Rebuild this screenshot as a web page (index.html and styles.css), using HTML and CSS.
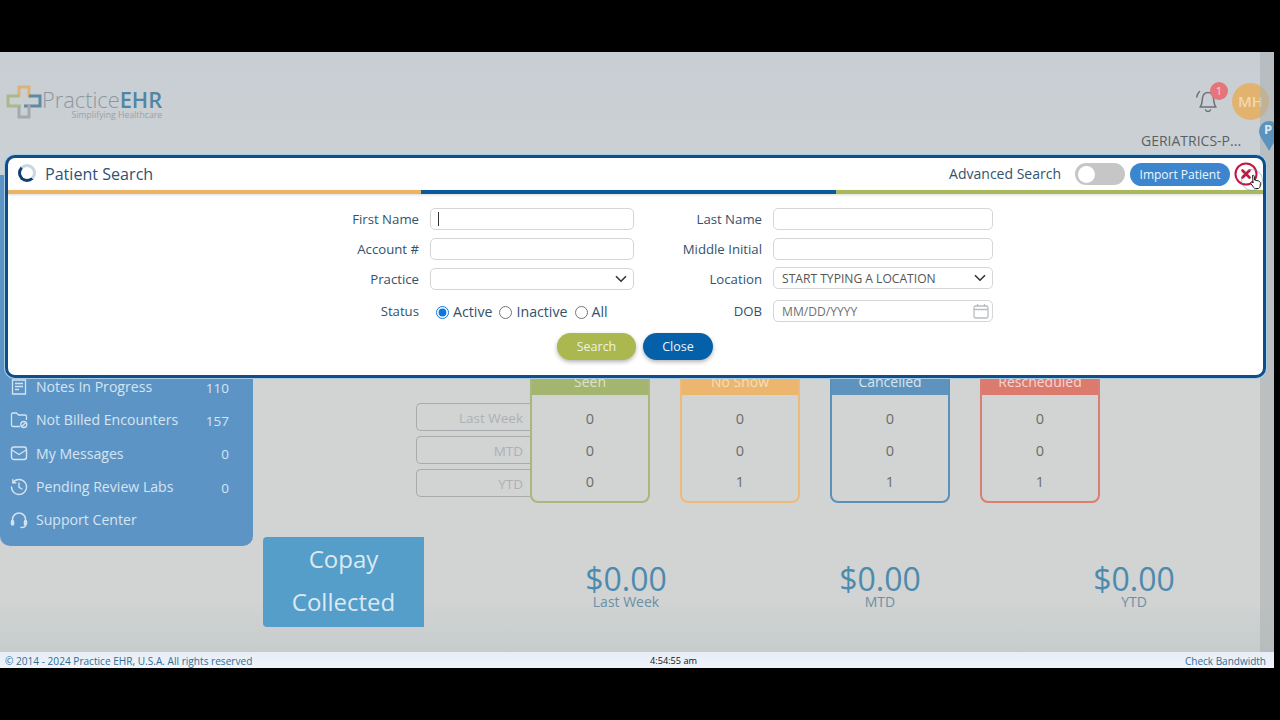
FILE: index.html
```html
<!DOCTYPE html>
<html lang="en">

<head>
  <meta charset="UTF-8">
  <meta name="viewport" content="width=device-width, initial-scale=1.0">
  <title>Practice EHR</title>
  <link rel="stylesheet" href="styles.css">
</head>

<body>
  <div class="app">

    <header class="top">
      <div class="logo">
        <svg class="logo-mark" width="36" height="34" viewBox="0 0 36 34" fill="none" stroke-width="3">
          <path d="M13 12V2H23V13" stroke="#dcb27a" />
          <path d="M13 11H2V21H15" stroke="#aab88a" />
          <path d="M23 11H34V21H18" stroke="#5d8aa6" />
          <path d="M13 22V32H23V19" stroke="#a3a9ad" />
        </svg>
        <div class="logo-text">
          <div class="logo-name">Practice<b>EHR</b></div>
          <div class="logo-sub">Simplifying Healthcare</div>
        </div>
      </div>
      <div class="user">
        <div class="user-row">
          <svg class="bell" width="26" height="28" viewBox="0 0 26 28" fill="none" stroke="#6d7377" stroke-width="1.5" stroke-linecap="round" stroke-linejoin="round">
            <path d="M5 20c2-2 2-5 2.500-9 .5-3.500 3-5.500 5.500-5.500s5 2 5.500 5.500c.5 4 .5 7 2.500 9z" />
            <path d="M10.500 23a2.800 2.800 0 0 0 5 0" />
            <path d="M4.500 4.500C3 6 2 8 1.800 10" />
          </svg>
          <span class="bell-count">1</span>
          <div class="avatar">MH</div>
        </div>
        <div class="user-practice">GERIATRICS-P...</div>
      </div>
    </header>

    <div class="main">
      <nav class="side">
        <a class="side-item">
          <svg width="18" height="18" viewBox="0 0 18 18" fill="none" stroke="#d3e3f0" stroke-width="1.300">
            <path d="M2.500 2h13v14h-13zM5 5.500h8M5 8.500h8M5 11.500h4" />
          </svg>
          <span class="side-label">Notes In Progress</span>
          <span class="side-count">110</span>
        </a>
        <a class="side-item">
          <svg width="18" height="18" viewBox="0 0 18 18" fill="none" stroke="#d3e3f0" stroke-width="1.300" stroke-linejoin="round">
            <path d="M10 15.500H3a1.500 1.500 0 0 1-1.500-1.500V3.500A1.500 1.500 0 0 1 3 2h3.500l2 2H15a1.500 1.500 0 0 1 1.500 1.500V9" />
            <circle cx="13.800" cy="13.500" r="3" />
            <path d="M12 15.300l3.600-3.600" />
          </svg>
          <span class="side-label">Not Billed Encounters</span>
          <span class="side-count">157</span>
        </a>
        <a class="side-item">
          <svg width="18" height="18" viewBox="0 0 18 18" fill="none" stroke="#d3e3f0" stroke-width="1.400" stroke-linejoin="round">
            <rect x="1.500" y="3" width="15" height="12.500" rx="2.500" />
            <path d="M1.800 6L9 10.500 16.200 6" />
          </svg>
          <span class="side-label">My Messages</span>
          <span class="side-count">0</span>
        </a>
        <a class="side-item">
          <svg width="18" height="18" viewBox="0 0 18 18" fill="none" stroke="#d3e3f0" stroke-width="1.400" stroke-linecap="round">
            <path d="M3 4.500A7.500 7.500 0 1 1 1.500 9" />
            <path d="M2.800 1.800v3h3M9 5v4.300l3 1.700" />
          </svg>
          <span class="side-label">Pending Review Labs</span>
          <span class="side-count">0</span>
        </a>
        <a class="side-item">
          <svg width="18" height="18" viewBox="0 0 18 18" fill="none" stroke="#d3e3f0" stroke-width="1.500" stroke-linecap="round">
            <path d="M2.500 11V8.500a6.500 6.500 0 0 1 13 0V11" />
            <rect x="1.500" y="9.500" width="2" height="4.500" rx="1" fill="#d3e3f0" />
            <rect x="14.500" y="9.500" width="2" height="4.500" rx="1" fill="#d3e3f0" />
            <path d="M15.500 14c0 1.500-2 2.500-4.500 2.500" />
          </svg>
          <span class="side-label">Support Center</span>
        </a>
      </nav>

      <section class="content">
        <div class="stats">
          <div class="period-list">
            <div class="period">Last Week</div>
            <div class="period">MTD</div>
            <div class="period">YTD</div>
          </div>
          <div class="card card-seen">
            <div class="card-title">Seen</div>
            <div class="card-row">0</div>
            <div class="card-row">0</div>
            <div class="card-row">0</div>
          </div>
          <div class="card card-noshow">
            <div class="card-title">No Show</div>
            <div class="card-row">0</div>
            <div class="card-row">0</div>
            <div class="card-row">1</div>
          </div>
          <div class="card card-cancelled">
            <div class="card-title">Cancelled</div>
            <div class="card-row">0</div>
            <div class="card-row">0</div>
            <div class="card-row">1</div>
          </div>
          <div class="card card-rescheduled">
            <div class="card-title">Rescheduled</div>
            <div class="card-row">0</div>
            <div class="card-row">0</div>
            <div class="card-row">1</div>
          </div>
        </div>

        <div class="copay">
          <div class="copay-tile">Copay<br>Collected</div>
          <div class="copay-amounts">
            <div class="amount"><div class="amount-value">$0.00</div><div class="amount-label">Last Week</div></div>
            <div class="amount"><div class="amount-value">$0.00</div><div class="amount-label">MTD</div></div>
            <div class="amount"><div class="amount-value">$0.00</div><div class="amount-label">YTD</div></div>
          </div>
        </div>
      </section>
    </div>

    <footer class="foot">
      <div class="foot-copy">© 2014 - 2024 Practice EHR, U.S.A. All rights reserved</div>
      <div class="foot-time">4:54:55 am</div>
      <div class="foot-link">Check Bandwidth</div>
    </footer>

    <div class="scrollbar"></div>
    <svg class="pin" width="20" height="32" viewBox="0 0 20 32">
      <path d="M10 1a10 10 0 0 1 10 10c0 6-6 12-10 20C6 23 0 17 0 11A10 10 0 0 1 10 1z" fill="#5b93bd" />
      <text x="5" y="14" font-size="13" font-weight="700" fill="#dde9f2" font-family="Open Sans">P</text>
    </svg>

    <div class="modal">
      <div class="modal-head">
        <span class="spinner"></span>
        <h1 class="modal-title">Patient Search</h1>
        <span class="adv-label">Advanced Search</span>
        <span class="toggle"><span class="toggle-knob"></span></span>
        <button class="btn-import">Import Patient</button>
        <span class="btn-x">
          <svg width="24" height="24" viewBox="0 0 24 24" fill="none" stroke-linecap="round">
            <circle cx="12" cy="12" r="10.500" stroke="#c5163f" stroke-width="2" />
            <path d="M8.500 8.500l7 7M15.500 8.500l-7 7" stroke="#c5163f" stroke-width="2.600" />
          </svg>
        </span>
      </div>
      <div class="stripe"><i class="s-orange"></i><i class="s-blue"></i><i class="s-green"></i></div>

      <form class="search-form">
        <label class="f-label">First Name</label>
        <input class="f-input f-focus" type="text">
        <label class="f-label">Last Name</label>
        <input class="f-input" type="text">

        <label class="f-label">Account #</label>
        <input class="f-input" type="text">
        <label class="f-label">Middle Initial</label>
        <input class="f-input" type="text">

        <label class="f-label">Practice</label>
        <div class="f-input f-select">
          <span></span>
          <svg width="12" height="8" viewBox="0 0 12 8" fill="none" stroke="#333" stroke-width="1.600"><path d="M1 1.200l5 5 5-5" /></svg>
        </div>
        <label class="f-label">Location</label>
        <div class="f-input f-select f-up">
          <span>START TYPING A LOCATION</span>
          <svg width="12" height="8" viewBox="0 0 12 8" fill="none" stroke="#333" stroke-width="1.600"><path d="M1 1.200l5 5 5-5" /></svg>
        </div>

        <label class="f-label f-row4">Status</label>
        <div class="radios f-row4">
          <input type="radio" name="status" checked><span>Active</span>
          <input type="radio" name="status"><span>Inactive</span>
          <input type="radio" name="status"><span>All</span>
        </div>
        <label class="f-label f-row4">DOB</label>
        <div class="f-input f-select f-row4">
          <span class="f-hint">MM/DD/YYYY</span>
          <svg class="f-cal" width="16" height="15" viewBox="0 0 16 15" fill="none" stroke="#b9bdc0" stroke-width="1.300">
            <rect x="1" y="2" width="14" height="12" rx="1.500" />
            <path d="M1 5.500h14M4.500 0v2.500M11.500 0v2.500" />
          </svg>
        </div>
      </form>

      <div class="form-actions">
        <button class="btn btn-search">Search</button>
        <button class="btn btn-close">Close</button>
      </div>
    </div>

    <span class="hand-ring"></span>
    <svg class="hand" width="13" height="16" viewBox="0 0 13 16">
      <path d="M3.500 1.500c1-.5 1.700 0 1.800 1l.3 3.500 4 1c1.400.4 2 1.300 1.800 2.700l-.4 3c-.2 1-1 1.800-2 1.800H6.500c-.8 0-1.300-.3-1.800-1L1.800 9.500c-.5-.8.500-1.800 1.400-1.200l.9.700z" fill="#fff" stroke="#222" stroke-width="1" stroke-linejoin="round" />
    </svg>

  </div>
</body>

</html>
```

FILE: styles.css
```css
body {
  margin: 0;
  height: 720px;
  overflow: hidden;
  background: #000;
  font-family: 'Open Sans', 'Liberation Sans', sans-serif;
}

.app {
  position: relative;
  width: 1274px;
  height: 616px;
  margin-top: 52px;
  display: flex;
  flex-direction: column;
  overflow: hidden;
  background: linear-gradient(#c8ced3, #cbd0d4 100px, #d2d3d3 340px, #d2d3d3 550px, #c6cccc 600px);
}

/* top bar */
.top {
  height: 98px;
  display: flex;
  justify-content: space-between;
  flex-shrink: 0;
}

.logo {
  display: flex;
  align-items: flex-start;
  padding: 33px 0 0 6px;
}

.logo-text {
  margin-top: 2px;
}

.logo-name {
  font-size: 21.800px;
  line-height: 26px;
  font-weight: 300;
  color: #8b98a2;
}

.logo-name b {
  font-weight: 600;
  color: #4f86a4;
}

.logo-sub {
  margin-top: -3px;
  font-size: 8.700px;
  line-height: 11px;
  text-align: right;
  color: #99a2a8;
}

.user {
  width: 140px;
  padding: 30px 0 0 61px;
  box-sizing: border-box;
  position: relative;
}

.user-row {
  display: flex;
  align-items: center;
  height: 38px;
}

.bell {
  margin-right: 11px;
  flex-shrink: 0;
}

.bell-count {
  position: absolute;
  left: 76px;
  top: 30px;
  width: 18px;
  height: 18px;
  border-radius: 50%;
  background: #e4757a;
  color: #f6d7d4;
  font-size: 11px;
  line-height: 18px;
  text-align: center;
}

.avatar {
  width: 37px;
  height: 37px;
  flex-shrink: 0;
  border-radius: 50%;
  background: #e2b36f;
  color: #f1d9b2;
  font-size: 15px;
  font-weight: 600;
  line-height: 37px;
  text-align: center;
}

.user-practice {
  margin: 11px 0 0 -54px;
  font-size: 14px;
  line-height: 20px;
  color: #5b6064;
  white-space: nowrap;
}

/* page body */
.main {
  flex: 1;
  display: flex;
  min-height: 0;
}

.side {
  width: 253px;
  height: 371px;
  margin-top: 25px;
  flex-shrink: 0;
  box-sizing: border-box;
  padding-top: 195px;
  background: #5d94c6;
  border-radius: 0 0 10px 10px;
}

.side-item {
  height: 33.300px;
  display: flex;
  align-items: center;
  padding: 0 24px 0 10px;
  color: #d6e5f1;
  font-size: 14.100px;
}

.side-label {
  flex: 1;
  margin-left: 8px;
}

.side-count {
  margin-top: 2px;
  font-size: 13.500px;
}

.content {
  flex: 1;
  padding: 219px 0 0 10px;
  min-width: 0;
}

.stats {
  display: flex;
  align-items: flex-start;
  padding-left: 153px;
  height: 134px;
}

.period-list {
  width: 114px;
  padding-top: 34px;
  display: flex;
  flex-direction: column;
  gap: 5px;
}

.period {
  height: 28px;
  box-sizing: border-box;
  border: 1.500px solid #a7abad;
  border-right: 0;
  border-radius: 5px 0 0 5px;
  padding-right: 7px;
  color: #aeb1b2;
  font-size: 13.500px;
  line-height: 29px;
  text-align: right;
}

.card {
  width: 120px;
  height: 134px;
  box-sizing: border-box;
  margin-right: 30px;
  border: 2px solid;
  border-radius: 0 0 8px 8px;
  background: #d2d3d3;
  color: #6a6d6e;
  text-align: center;
  font-size: 14.500px;
}

.card-title {
  height: 24px;
  margin-bottom: 8px;
  font-size: 14px;
  line-height: 22px;
}

.card-row {
  height: 31.500px;
  line-height: 31.500px;
}

.card-seen { border-color: #a9b77c; }
.card-seen .card-title { background: #a4b56f; color: #dfe4c8; }

.card-noshow { border-color: #ecbb7c; }
.card-noshow .card-title { background: #ecb66e; color: #f3dfbc; }

.card-cancelled { border-color: #5b90b7; }
.card-cancelled .card-title { background: #5d93bd; color: #d7e6f1; }

.card-rescheduled { border-color: #dd7c70; }
.card-rescheduled .card-title { background: #dc7a6e; color: #f5d6d0; }

.copay {
  display: flex;
  margin-top: 34px;
  height: 90px;
}

.copay-tile {
  width: 161px;
  flex-shrink: 0;
  background: #559ec9;
  border-radius: 4px 0 0 4px;
  color: #dce9f1;
  font-size: 24px;
  line-height: 43px;
  text-align: center;
}

.copay-amounts {
  display: grid;
  grid-template-columns: repeat(3, 254px);
  padding-left: 75px;
  padding-top: 26px;
}

.amount {
  text-align: center;
}

.amount-value {
  font-size: 32px;
  line-height: 32px;
  color: #4d8bae;
}

.amount-label {
  font-size: 14px;
  line-height: 14px;
  color: #6a90a6;
}

/* footer */
.foot {
  height: 16px;
  flex-shrink: 0;
  display: flex;
  padding-right: 8px;
  background: linear-gradient(#e6edf6, #f0f4f9);
  font-size: 10.100px;
  line-height: 18px;
  color: #2f6d96;
}

.foot-copy {
  width: 645px;
  padding-left: 5px;
}

.foot-time {
  color: #111;
  font-size: 9.200px;
}

.foot-link {
  margin-left: auto;
  font-size: 10px;
}

.scrollbar {
  position: absolute;
  right: 0;
  top: 0;
  bottom: 16px;
  width: 14px;
  background: rgba(170, 174, 176, 0.55);
}

.pin {
  position: absolute;
  left: 1259px;
  top: 68px;
}

/* modal */
.modal {
  position: absolute;
  left: 5px;
  top: 103px;
  width: 1261px;
  height: 223px;
  box-sizing: border-box;
  border: 3px solid #0f4e88;
  border-radius: 10px;
  background: #fff;
  box-shadow: 0 0 0 1px #a9cbe4;
}

.modal-head {
  height: 32px;
  display: flex;
  align-items: center;
  padding-left: 10px;
}

.spinner {
  width: 18px;
  height: 18px;
  box-sizing: border-box;
  border-radius: 50%;
  border: 3px solid #c5d7e4;
  border-bottom-color: #0f3f6c;
  border-left-color: #0f3f6c;
  margin-top: -2px;
}

.modal-title {
  margin: 0 0 0 9px;
  flex: 1;
  font-size: 16.100px;
  font-weight: 400;
  color: #2f5270;
}

.adv-label {
  margin-top: -2px;
  font-size: 14px;
  color: #33526c;
}

.toggle {
  width: 50px;
  height: 22px;
  margin-left: 14px;
  border-radius: 11px;
  background: #c6c6c6;
  display: flex;
  align-items: center;
  padding-left: 3px;
  box-sizing: border-box;
}

.toggle-knob {
  width: 17px;
  height: 17px;
  border-radius: 50%;
  background: #fff;
}

.btn-import {
  width: 100px;
  height: 23px;
  margin-left: 5px;
  padding: 0;
  border: 0;
  border-radius: 12px;
  background: #3b86cf;
  color: #f0f6fb;
  font-family: inherit;
  font-size: 12px;
}

.btn-x {
  width: 24px;
  height: 24px;
  margin: 0 5px 0 4px;
}

.stripe {
  height: 4px;
  display: flex;
  box-shadow: 0 1px 3px rgba(0, 0, 0, 0.15);
}

.stripe i {
  display: block;
}

.s-orange { width: 413px; background: #e8b566; }
.s-blue { width: 415px; background: #0b5a9b; }
.s-green { flex: 1; background: #a9b85a; }

.search-form {
  display: grid;
  grid-template-columns: 79px 204px 117px 220px;
  grid-auto-rows: 22px;
  column-gap: 11px;
  row-gap: 8px;
  width: max-content;
  margin: 14px 0 0 332px;
}

.f-label {
  font-size: 13.200px;
  line-height: 23px;
  text-align: right;
  color: #33526c;
  white-space: nowrap;
}

.f-input {
  width: 100%;
  height: 22px;
  margin: 0;
  box-sizing: border-box;
  border: 1px solid #d6d6d6;
  border-radius: 5px;
  background: #fff;
  outline: 0;
}

.f-focus {
  background: linear-gradient(#333, #333) 7px 3px / 1px 14px no-repeat #fff;
}

.f-select {
  display: flex;
  align-items: center;
  justify-content: space-between;
  padding: 0 6px 0 8px;
  font-size: 12.100px;
  color: #555;
}

.f-up {
  margin-top: -1px;
}

.f-row4 {
  margin-top: 2px;
}

.f-hint {
  color: #6e7174;
}

.f-cal {
  margin-right: -3px;
}

.radios {
  display: flex;
  align-items: center;
  padding: 3px 0 0 6px;
  font-size: 14.200px;
  color: #33526c;
}

.radios input {
  width: 13px;
  height: 13px;
  margin: 1px 4px 0 0;
  accent-color: #0b76e0;
}

.radios span {
  margin-right: 7px;
}

.form-actions {
  display: flex;
  justify-content: center;
  gap: 7px;
  margin: 13px 0 0 -1px;
}

.btn {
  height: 27px;
  padding: 0;
  border: 0;
  border-radius: 14px;
  color: #eef3e0;
  font-family: inherit;
  font-size: 12.500px;
  box-shadow: 0 2px 4px rgba(0, 0, 0, 0.3);
}

.btn-search {
  width: 79px;
  background: #abb84f;
}

.btn-close {
  width: 70px;
  background: #0460a9;
  color: #eef5fb;
}

.hand-ring {
  position: absolute;
  left: 1241px;
  top: 117px;
  width: 20px;
  height: 20px;
  border-radius: 50%;
  border: 1px solid rgba(90, 140, 190, 0.5);
}

.hand {
  position: absolute;
  left: 1249px;
  top: 122px;
}
```
